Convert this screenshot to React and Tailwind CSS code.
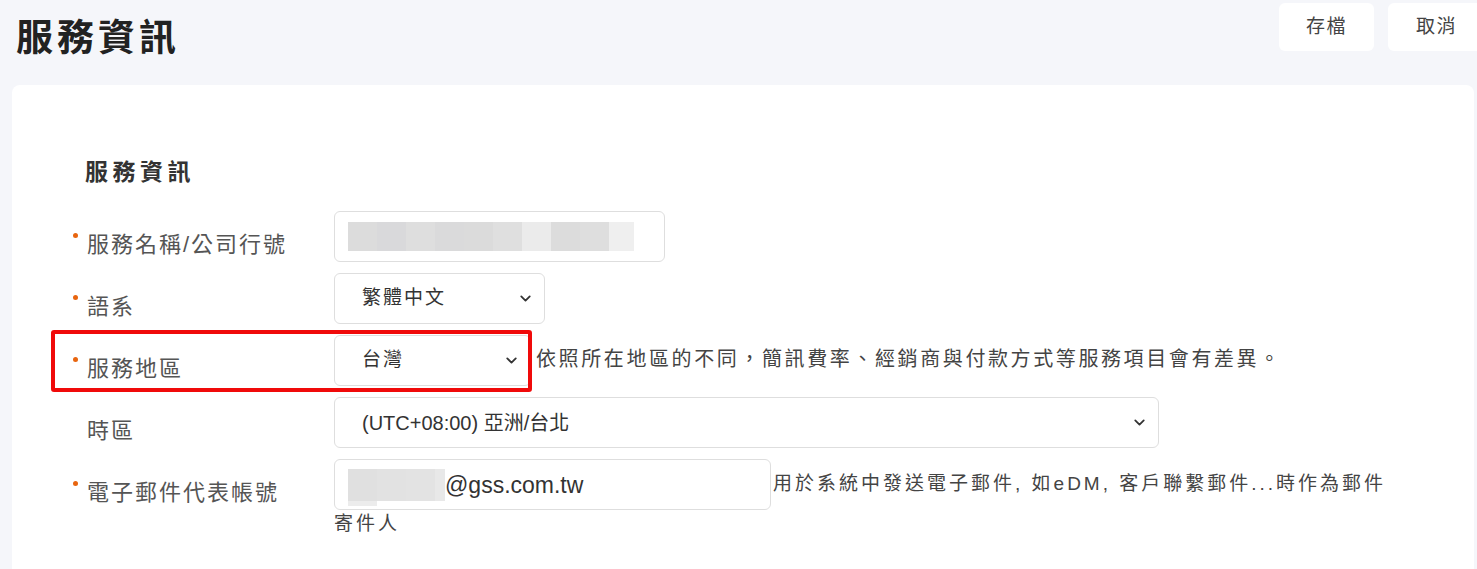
import { FiChevronDown } from "react-icons/fi";

const font = { fontFamily: '"Liberation Sans", "Noto Sans CJK TC", sans-serif' };

const Dot = ({ on }) => (
  <span className={"mt-[5px] h-[5px] w-[5px] shrink-0 rounded-full " + (on ? "bg-[#e8650f]" : "")} />
);

const Label = ({ text, required = true }) => (
  <div className="flex w-[261px] shrink-0 items-start gap-x-[9px] pt-[17px]">
    <Dot on={required} />
    <span className="text-[22px] leading-[33px] tracking-[2px] text-[#555]">{text}</span>
  </div>
);

const Select = ({ value, width, tracking = "tracking-[2px]" }) => (
  <div
    className={
      "relative flex h-[51px] shrink-0 items-center rounded-md border border-[#dedede] bg-white pl-[27px] text-[19px] text-[#333] " +
      width
    }
  >
    <span className={tracking}>{value}</span>
    <FiChevronDown className="absolute right-[10px] text-[17px] text-[#333]" strokeWidth={2.5} />
  </div>
);

// blurred placeholder blocks
const nameBlocks = ["#dcdcdc", "#d9d9db", "#dedede", "#dadadb", "#dbdbdb", "#dfdfdf", "#ebebeb", "#dcdcdc", "#dedede", "#efefef"];

export default function App() {
  return (
    <main className="min-h-[569px] bg-[#f5f6fa]" style={font}>
      {/* header */}
      <div className="flex h-[85px] items-start justify-between">
        <h1 className="pl-[16px] pt-[13px] text-[37px] font-bold leading-[52px] tracking-[4px] text-[#222]">服務資訊</h1>
        <div className="flex gap-x-[14px] pt-[3px]">
          <button className="h-[48px] w-[95px] rounded-md bg-white text-[19px] tracking-[1.5px] text-[#444]">存檔</button>
          <button className="h-[48px] w-[89px] rounded-l-md bg-white pl-[8px] text-[19px] tracking-[1.5px] text-[#444]">取消</button>
        </div>
      </div>

      {/* card */}
      <div className="ml-[12px] mr-[3px] rounded-t-lg bg-white pb-[40px] pt-[70px]">
        <h2 className="pl-[73px] text-[23px] font-bold leading-[34px] tracking-[4.5px] text-[#333]">服務資訊</h2>

        <div className="mt-[22px] flex flex-col gap-y-[11px] pl-[61px]">
          {/* 服務名稱 */}
          <div className="flex">
            <Label text="服務名稱/公司行號" />
            <div className="flex h-[51px] w-[331px] items-center rounded-md border border-[#dedede] bg-white pl-[13px]">
              <div className="flex h-[29px]">
                {nameBlocks.map((c, i) => (
                  <span key={i} className={i === 9 ? "w-[25px]" : "w-[29px]"} style={{ backgroundColor: c }} />
                ))}
              </div>
            </div>
          </div>

          {/* 語系 */}
          <div className="flex">
            <Label text="語系" />
            <Select value="繁體中文" width="w-[211px]" />
          </div>

          {/* 服務地區 */}
          <div className="relative flex">
            <Label text="服務地區" />
            <Select value="台灣" width="w-[197px]" />
            <p className="ml-[5px] pt-[6px] text-[20px] leading-[36px] tracking-[2.6px] text-[#444]">
              依照所在地區的不同，簡訊費率、經銷商與付款方式等服務項目會有差異。
            </p>
            <div className="absolute left-[-22px] top-[-5px] h-[62px] w-[481px] rounded-[3px] border-[4px] border-[#f00a0a]" />
          </div>

          {/* 時區 */}
          <div className="flex">
            <Label text="時區" required={false} />
            <Select value="(UTC+08:00) 亞洲/台北" width="w-[825px] text-[20px]" tracking="tracking-[0px]" />
          </div>

          {/* 電子郵件 */}
          <div className="flex">
            <Label text="電子郵件代表帳號" />
            <div className="w-[1060px] text-[19px] leading-[28px] tracking-[3px] text-[#444]">
              <span className="mr-[2px] inline-flex h-[51px] w-[437px] items-center rounded-md border border-[#dedede] bg-white pl-[13px] align-middle">
                <span className="relative flex h-[32px] w-[97px]">
                  <span className="w-[29px] bg-[#e0e0e0]" />
                  <span className="w-[29px] bg-[#e2e2e2]" />
                  <span className="w-[29px] bg-[#e3e3e3]" />
                  <span className="w-[10px] bg-[#e8e8e8]" />
                  <span className="absolute left-0 top-[32px] h-[5px] w-[29px] bg-[#ececec]" />
                </span>
                <span className="text-[23px] tracking-normal text-[#333]">@gss.com.tw</span>
              </span>
              <span>用於系統中發送電子郵件, 如eDM, 客戶聯繫郵件...時作為郵件寄件人</span>
            </div>
          </div>
        </div>
      </div>
    </main>
  );
}
